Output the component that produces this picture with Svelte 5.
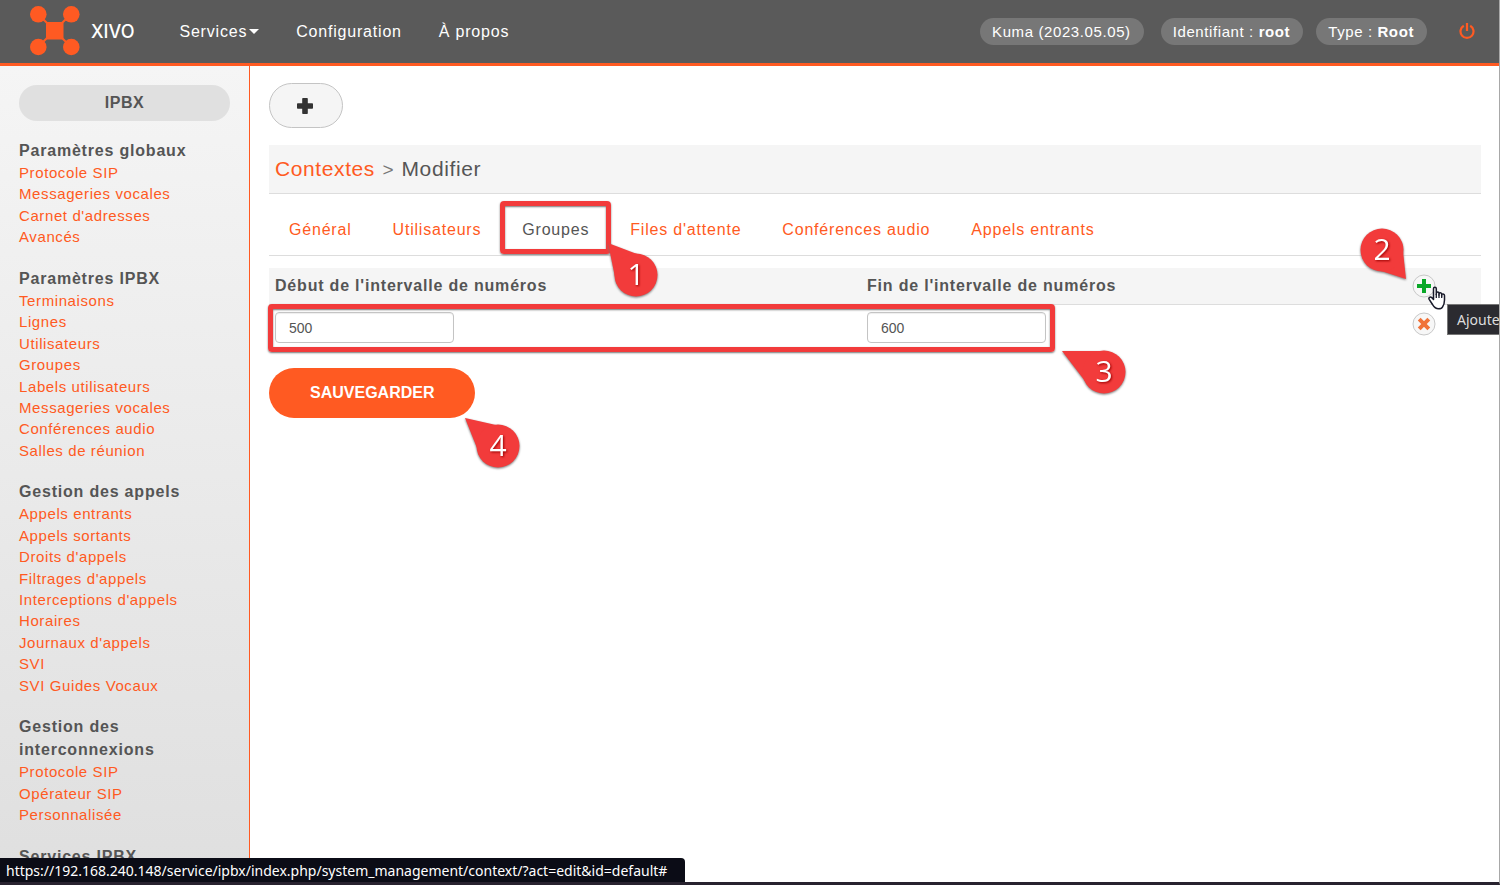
<script>
  const groups = [
    { title: 'Paramètres globaux', links: ['Protocole SIP', 'Messageries vocales', "Carnet d'adresses", 'Avancés'] },
    {
      title: 'Paramètres IPBX',
      links: ['Terminaisons', 'Lignes', 'Utilisateurs', 'Groupes', 'Labels utilisateurs', 'Messageries vocales', 'Conférences audio', 'Salles de réunion']
    },
    {
      title: 'Gestion des appels',
      links: ['Appels entrants', 'Appels sortants', "Droits d'appels", "Filtrages d'appels", "Interceptions d'appels", 'Horaires', "Journaux d'appels", 'SVI', 'SVI Guides Vocaux']
    },
    { title: 'Gestion des interconnexions', links: ['Protocole SIP', 'Opérateur SIP', 'Personnalisée'] },
    { title: 'Services IPBX', links: [] }
  ];
  const tabs = ['Général', 'Utilisateurs', 'Groupes', "Files d'attente", 'Conférences audio', 'Appels entrants'];
  let active = $state('Groupes');
  let start = $state('500');
  let end = $state('600');
</script>

{#snippet pin(n, tip)}
  <svg class="pin pin{n}" width="72" height="72" viewBox="0 0 72 72" aria-hidden="true">
    <g class="drop">
      <polygon points={tip} />
      <circle cx="36" cy="36" r="21.5" />
    </g>
    <text x="36" y="46" text-anchor="middle">{n}</text>
  </svg>
{/snippet}

<div class="page">
  <header>
    <a class="brand" href="#home">
      <svg width="50" height="50" viewBox="0 0 50 50" aria-hidden="true">
        <g fill="#ff5a22" stroke="#ff5a22">
          <path d="M8 8 41 41M41 8 8 41" stroke-width="2" />
          <g stroke="none">
            <rect x="16" y="16" width="17.500" height="17.500" rx="1.500" />
            <circle cx="8.300" cy="8.300" r="8.300" />
            <circle cx="41.300" cy="8.300" r="8.300" />
            <circle cx="8.300" cy="41" r="8.300" />
            <circle cx="41.300" cy="41" r="8.300" />
          </g>
        </g>
      </svg>
      <span>XIVO</span>
    </a>
    <nav class="top">
      <a href="#services">Services<i class="caret"></i></a>
      <a href="#configuration">Configuration</a>
      <a href="#apropos">À propos</a>
    </nav>
    <div class="status">
      <span class="pill version">Kuma (2023.05.05)</span>
      <span class="pill">Identifiant : <b>root</b></span>
      <span class="pill">Type : <b>Root</b></span>
      <a class="power" href="#logout" aria-label="Déconnexion">
        <svg width="16" height="17" viewBox="0 0 16 17" fill="none" stroke="#ff5a22" stroke-width="2.200">
          <path d="M4.800 2.800A6.500 6.500 0 1 0 11.200 2.800" />
          <path d="M8 0v8" />
        </svg>
      </a>
    </div>
  </header>

  <div class="body">
    <aside>
      <div class="module">IPBX</div>
      {#each groups as g}
        <section>
          <h2>{g.title}</h2>
          <ul>
            {#each g.links as l}
              <li><a href="#menu">{l}</a></li>
            {/each}
          </ul>
        </section>
      {/each}
    </aside>

    <main>
      <button class="add" type="button" aria-label="Ajouter">
        <svg width="16" height="16" viewBox="0 0 16 16" aria-hidden="true">
          <path fill="#333" d="M6 0h4q.8 0 .8.8V5.200h4.400q.8 0 .8.8v4q0 .8-.8.8h-4.400v4.400q0 .8-.8.8H6q-.8 0-.8-.8v-4.400H.8Q0 10.800 0 10V6q0-.8.8-.8h4.400V.8Q5.200 0 6 0z" />
        </svg>
      </button>
      <h1><a href="#contextes">Contextes</a> <small>&gt;</small> Modifier</h1>
      <nav class="tabs">
        {#each tabs as t}
          <button type="button" class:active={active === t} onclick={() => (active = t)}>
            {t}
            {#if t === 'Groupes'}
              <span class="mark tabmark"></span>
              {@render pin(1, '8,4 16,43 37,15')}
            {/if}
          </button>
        {/each}
      </nav>

      <form onsubmit={(e) => e.preventDefault()}>
        <table>
          <thead>
            <tr>
              <th id="from">Début de l'intervalle de numéros</th>
              <th id="to">Fin de l'intervalle de numéros</th>
              <th class="act">
                <button class="round" type="button" aria-label="Ajouter">
                  <svg width="24" height="24" viewBox="0 0 24 24">
                    <circle cx="12" cy="12" r="11" fill="#f7f7f7" stroke="#c8c8c8" />
                    <path d="M12 5v14M5 12h14" stroke="#0aa828" stroke-width="4" />
                  </svg>
                </button>
                {@render pin(2, '60,65 56,28 32,56')}
                <svg class="cursor" width="20" height="24" viewBox="0 0 20 24" aria-hidden="true">
                  <path
                    d="M5.500 13.500V2.700C5.500.6 8.300.6 8.300 2.700V8.500 7.500C8.300 5.600 11 5.600 11 7.500V9 8C11 6.300 13.700 6.300 13.700 8.300V10 9C13.700 7.400 16.500 7.600 16.500 9.600V14C16.500 18 15.500 19.500 14.500 21Q13.800 22.800 10.500 22.800C7 22.800 6 21 4.500 18.500L1.200 13.300C.2 11.600 2.300 10.300 3.700 11.600Z"
                    fill="#fff" stroke="#181a2a" stroke-width="1.500" stroke-linejoin="round"
                  />
                  <path d="M8.300 8v4M11 8.500V12M13.700 9.500V12" stroke="#181a2a" stroke-width="1.300" />
                </svg>
                <span class="tooltip">Ajoute</span>
              </th>
            </tr>
          </thead>
          <tbody>
            <tr>
              <td>
                <input aria-labelledby="from" bind:value={start} />
                <span class="mark rowmark"></span>
              </td>
              <td>
                <input aria-labelledby="to" bind:value={end} />
                {@render pin(3, '-6,15 17,45 38,15')}
              </td>
              <td class="act">
                <button class="round" type="button" aria-label="Supprimer">
                  <svg width="24" height="24" viewBox="0 0 24 24">
                    <circle cx="12" cy="12" r="11" fill="#f7f7f7" stroke="#c8c8c8" />
                    <path d="M7.200 7.200l9.600 9.600M16.800 7.200l-9.600 9.600" stroke="#f0733a" stroke-width="4" />
                  </svg>
                </button>
              </td>
            </tr>
          </tbody>
        </table>
        <button class="save" type="submit">SAUVEGARDER{@render pin(4, '3,8 15,38 34,15')}</button>
      </form>
    </main>
  </div>
  <div class="url">https://192.168.240.148/service/ipbx/index.php/system_management/context/?act=edit&amp;id=default#</div>
</div>

<style>
  :global(body) { margin: 0; background: #fff; }
  .page {
    position: relative;
    box-sizing: border-box;
    height: 100vh;
    overflow: hidden;
    display: flex;
    flex-direction: column;
    border-right: 1px solid #a8a8a8;
    border-bottom: 3px solid #28222f;
    font: 15px/1.43 "Liberation Sans", Arial, sans-serif;
    letter-spacing: 0.04em;
    color: #555;
  }
  a { color: #ff5a22; text-decoration: none; }
  button { font: inherit; letter-spacing: inherit; cursor: pointer; }
  header {
    flex: none;
    display: flex;
    align-items: center;
    height: 63px;
    padding: 0 24px 0 30px;
    background: #5a5a5a;
    border-bottom: 3px solid #ff5a22;
    font-size: 16px;
  }
  header a { color: #fff; }
  .brand { display: flex; align-items: center; gap: 11px; font: 500 18px Inter, sans-serif; letter-spacing: 0; }
  .brand svg { margin-bottom: 1px; }
  .top { display: flex; gap: 37px; margin-left: 45px; padding-top: 1px; letter-spacing: 0.05em; }
  .caret { display: inline-block; margin-left: 2px; vertical-align: 3px; border: 5px solid transparent; border-top-color: #fff; border-bottom: 0; }
  .status { display: flex; align-items: center; gap: 13px; margin-left: auto; color: #fff; font-size: 15px; }
  .pill { padding: 3px 13px 3px 12px; border-radius: 14px; background: #777; }
  .version { margin-right: 4px; }
  .power { display: flex; margin-left: 19px; }
  .body { flex: 1; min-height: 0; display: flex; }
  aside {
    flex: none;
    box-sizing: border-box;
    width: 250px;
    padding: 19px 19px 0;
    overflow: hidden;
    border-right: 1px solid #ff5a22;
    background: linear-gradient(#f5f5f5, #dfdfdf);
  }
  .module { margin-bottom: 18px; border-radius: 18px; background: #e0e0e0; text-align: center; font-weight: bold; font-size: 16px; line-height: 36px; }
  section { margin-bottom: 19px; }
  h2 { margin: 0; font-size: 16px; line-height: 23px; letter-spacing: 0.05em; }
  ul { margin: 0; padding: 0; list-style: none; }
  main { flex: 1; min-width: 0; padding: 17px 18px 0 19px; }
  .add { display: flex; align-items: center; justify-content: center; width: 74px; height: 45px; padding: 0 2px 0 0; border: 1px solid #c4c4c4; border-radius: 23px; background: #f5f5f5; }
  h1 { margin: 17px 0 0; padding: 0 6px; border-bottom: 1px solid #ddd; background: #f5f5f5; font-size: 21px; font-weight: normal; line-height: 48px; }
  small { margin: 0 1px; font-size: 19px; line-height: 1; color: #777; }
  .tabs { display: flex; gap: 1px; padding-top: 11px; border-bottom: 1px solid #ddd; }
  .tabs button { position: relative; padding: 0 20px; height: 50px; border: 0; background: none; color: #ff5a22; font-size: 16px; letter-spacing: 0.05em; }
  .tabs .active { color: #555; }
  .mark { position: absolute; border: 5px solid #f23b3b; border-radius: 4px; box-shadow: 0 1px 2px #777, inset 0 1px 2px #777; pointer-events: none; }
  .tabmark { inset: -4px -2px 1px -2px; }
  table { width: 100%; margin: 12px 0 17px; border-collapse: collapse; table-layout: fixed; }
  thead tr { background: #f5f5f5; border-bottom: 1px solid #ddd; }
  th, td { position: relative; padding: 0 6px; text-align: left; }
  th { height: 36px; font-size: 16px; letter-spacing: 0.05em; }
  th:nth-child(2) { width: 533px; }
  td { padding: 7px 6px 8px; vertical-align: top; }
  th.act { width: 63px; }
  input { box-sizing: border-box; display: block; width: 179px; height: 31px; padding: 0 13px; border: 1px solid #c4c4c4; border-radius: 4px; box-shadow: inset 0 1px 1px #eee; color: #555; font: 14px "Liberation Sans", sans-serif; }
  .rowmark { left: -1px; top: -1px; width: 777px; height: 38px; z-index: 1; }
  .round { display: block; padding: 0; border: 0; background: none; }
  .round svg { display: block; }
  .save { position: relative; display: block; height: 50px; padding: 0 41px; border: 0; border-radius: 25px; background: #ff5a22; color: #fff; font-size: 16px; font-weight: bold; letter-spacing: 0; }
  .pin { position: absolute; z-index: 2; overflow: visible; filter: drop-shadow(0 1px 1px #777); pointer-events: none; }
  .drop { fill: #f23b3b; }
  .pin text { fill: #fff; font: 500 30px "Open Sans", sans-serif; letter-spacing: 0; filter: drop-shadow(1px 1px 1px #900); }
  .pin1 { left: 98px; top: 34px; }
  .pin2 { left: -60px; top: -54px; }
  .pin3 { left: 207px; top: 31px; }
  .pin4 { left: 193px; top: 42px; }
  .cursor { position: absolute; z-index: 3; left: 22px; top: 18px; }
  .tooltip { position: absolute; z-index: 2; left: 41px; top: 36px; padding: 0 9px; border: 1px solid #777; background: #2b2b30; color: #ddd; font: 14px/29px "Noto Sans", sans-serif; letter-spacing: 0; }
  .url { position: absolute; left: 0; bottom: 0; padding: 2px 18px 0 6px; border-radius: 0 4px 0 0; background: #0b0c16; color: #fff; font: 14px/22px "Noto Sans", sans-serif; letter-spacing: 0; }
</style>
